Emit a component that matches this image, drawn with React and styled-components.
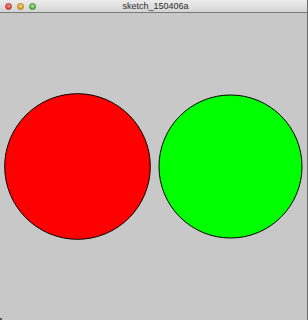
import React from "react";
import styled, { createGlobalStyle } from "styled-components";

const Global = createGlobalStyle`
  html, body { margin: 0; padding: 0; background: #c8c8c8; }
  #root { width: 308px; height: 320px; }
`;

const Window = styled.div`
  width: 308px;
  height: 320px;
  display: flex;
  flex-direction: column;
  background: #c8c8c8;
  box-sizing: border-box;
  border-right: 1px solid #6a6a6a;
  position: relative;
  overflow: hidden;
`;

const TitleBar = styled.div`
  height: 12px;
  flex: none;
  display: grid;
  grid-template-columns: 1fr auto 1fr;
  align-items: center;
  background: linear-gradient(#ececec, #d4d4d4);
  border-bottom: 1px solid #7a7a7a;
  padding: 0 5px;
`;

const Lights = styled.div`
  display: flex;
  gap: 5px;
  align-items: center;
`;

const Light = styled.span`
  width: 7px;
  height: 7px;
  border-radius: 50%;
  box-sizing: border-box;
  background: radial-gradient(circle at 50% 35%, ${(p) => p.$hi} 0%, ${(p) => p.$c} 70%);
  border: 0.5px solid ${(p) => p.$b};
`;

const Title = styled.div`
  font-family: "Liberation Sans", Arial, sans-serif;
  font-size: 9px;
  line-height: 12px;
  color: #2e2e2e;
  letter-spacing: 0px;
  padding-left: 4px;
`;

const Canvas = styled.svg`
  display: block;
  flex: 1;
  width: 307px;
`;

const Corner = styled.span`
  position: absolute;
  left: 0;
  bottom: 0;
  width: 2px;
  height: 2px;
  background: #555;
`;

export default function App() {
  return (
    <>
      <Global />
      <Window>
        <TitleBar>
          <Lights>
            <Light $c="#e0443e" $hi="#ff9a8f" $b="#b03a34" />
            <Light $c="#e2a01f" $hi="#ffd98a" $b="#b57d1a" />
            <Light $c="#5cb844" $hi="#b6ec9f" $b="#3f8a30" />
          </Lights>
          <Title>sketch_150406a</Title>
          <div />
        </TitleBar>
        <Canvas viewBox="0 13 307 307" preserveAspectRatio="none">
          <circle cx="77.5" cy="166.5" r="72.8" fill="#ff0000" stroke="#000" strokeWidth="1" />
          <circle cx="230.5" cy="166.5" r="71.5" fill="#00ff00" stroke="#000" strokeWidth="1" />
        </Canvas>
        <Corner />
      </Window>
    </>
  );
}
